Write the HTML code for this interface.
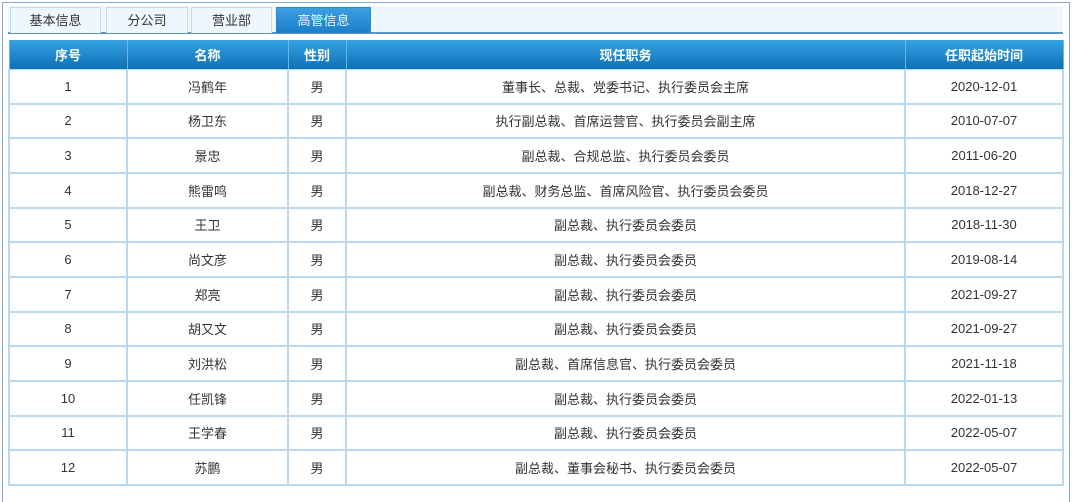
<!DOCTYPE html>
<html><head><meta charset="utf-8"><style>
*{margin:0;padding:0;box-sizing:border-box}
body{width:1080px;height:489px;background:#fff;position:relative;overflow:hidden;font-family:"Liberation Sans","Noto Sans CJK SC",sans-serif;color:#333}
.outer{position:absolute;left:2px;top:2px;width:1068px;height:500px;border:1px solid #8aa6c6;border-bottom:none;background:#fff}
.tabbar{position:absolute;left:8px;top:6px;width:1055px;height:28px;background:#eef7fd;border-bottom:2px solid #5d94c6}
.tab{position:absolute;top:7px;height:26px;background:#eef7fd;border:1px solid #c5d9ea;border-bottom:none;font-size:13px;text-align:center;line-height:25px;color:#333}
.tab.act{background:linear-gradient(#3c9fe0,#1b7fca);color:#e8f4ff;border-color:#2a88cf}
table{position:absolute;left:8px;top:40px;width:1054px;border-collapse:collapse;table-layout:fixed}
th{height:29px;background:linear-gradient(#35a2e2,#0e70b8);color:#fff;font-size:13px;font-weight:bold;border-left:1px solid #6cb6e6;border-right:1px solid #6cb6e6}
td{height:34.67px;font-size:13px;text-align:center;border:2px solid #bcd8f0;border-top:1px solid #bcd8f0;border-bottom:2px solid #bcd8f0;color:#333}
</style></head><body>
<div class="outer"></div>
<div class="tabbar"></div>
<div class="tab" style="left:10px;width:91px">基本信息</div>
<div class="tab" style="left:106px;width:82px">分公司</div>
<div class="tab" style="left:191px;width:81px">营业部</div>
<div class="tab act" style="left:276px;width:95px">高管信息</div>
<table>
<colgroup><col style="width:118px"><col style="width:161px"><col style="width:58px"><col style="width:559px"><col style="width:158px"></colgroup>
<tr><th>序号</th><th>名称</th><th>性别</th><th>现任职务</th><th>任职起始时间</th></tr>
<tr><td>1</td><td>冯鹤年</td><td>男</td><td>董事长、总裁、党委书记、执行委员会主席</td><td>2020-12-01</td></tr>
<tr><td>2</td><td>杨卫东</td><td>男</td><td>执行副总裁、首席运营官、执行委员会副主席</td><td>2010-07-07</td></tr>
<tr><td>3</td><td>景忠</td><td>男</td><td>副总裁、合规总监、执行委员会委员</td><td>2011-06-20</td></tr>
<tr><td>4</td><td>熊雷鸣</td><td>男</td><td>副总裁、财务总监、首席风险官、执行委员会委员</td><td>2018-12-27</td></tr>
<tr><td>5</td><td>王卫</td><td>男</td><td>副总裁、执行委员会委员</td><td>2018-11-30</td></tr>
<tr><td>6</td><td>尚文彦</td><td>男</td><td>副总裁、执行委员会委员</td><td>2019-08-14</td></tr>
<tr><td>7</td><td>郑亮</td><td>男</td><td>副总裁、执行委员会委员</td><td>2021-09-27</td></tr>
<tr><td>8</td><td>胡又文</td><td>男</td><td>副总裁、执行委员会委员</td><td>2021-09-27</td></tr>
<tr><td>9</td><td>刘洪松</td><td>男</td><td>副总裁、首席信息官、执行委员会委员</td><td>2021-11-18</td></tr>
<tr><td>10</td><td>任凯锋</td><td>男</td><td>副总裁、执行委员会委员</td><td>2022-01-13</td></tr>
<tr><td>11</td><td>王学春</td><td>男</td><td>副总裁、执行委员会委员</td><td>2022-05-07</td></tr>
<tr><td>12</td><td>苏鹏</td><td>男</td><td>副总裁、董事会秘书、执行委员会委员</td><td>2022-05-07</td></tr>
</table>
</body></html>
